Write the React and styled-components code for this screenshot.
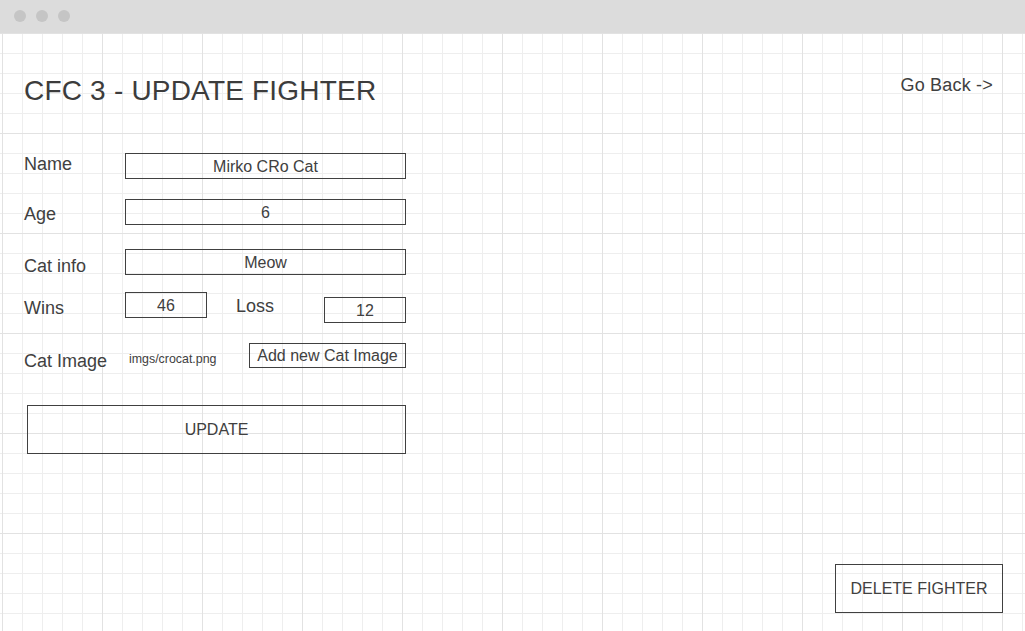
import React from "react";
import styled, { createGlobalStyle } from "styled-components";

const Global = createGlobalStyle`
  html, body { margin: 0; padding: 0; background: #fff; }
  body { font-family: "Liberation Sans", Arial, sans-serif; color: #404040; }
  * { box-sizing: border-box; }
`;

const Window = styled.div`
  width: 1025px;
  height: 631px;
  display: flex;
  flex-direction: column;
  overflow: hidden;
`;

const TitleBar = styled.div`
  height: 33px;
  flex: none;
  background: #dcdcdc;
  display: flex;
  align-items: center;
  gap: 10px;
  padding: 0 0 1px 14px;
`;

const Dot = styled.span`
  width: 12px;
  height: 12px;
  border-radius: 50%;
  background: #c5c5c5;
`;

const Canvas = styled.div`
  flex: 1;
  display: flex;
  flex-direction: column;
  background-color: #fff;
  background-image:
    linear-gradient(to right, #e2e2e2 1px, transparent 1px),
    linear-gradient(to bottom, #e2e2e2 1px, transparent 1px),
    linear-gradient(to right, #eeeeee 1px, transparent 1px),
    linear-gradient(to bottom, #eeeeee 1px, transparent 1px);
  background-size: 100px 100px, 100px 100px, 20px 20px, 20px 20px;
  background-position: 2px 0, 2px 0, 2px 0, 2px 0;
`;

const Header = styled.header`
  display: flex;
  justify-content: space-between;
  align-items: flex-start;
  padding: 42px 32px 0 24px;
`;

const Title = styled.h1`
  margin: 0;
  font-size: 28px;
  line-height: 32px;
  letter-spacing: 0.2px;
  font-weight: normal;
  color: #3c3c3c;
`;

const BackLink = styled.a`
  font-size: 18px;
  line-height: 20px;
  letter-spacing: 0.2px;
  color: #404040;
  text-decoration: none;
  cursor: pointer;
`;

const Form = styled.form`
  width: 406px;
  padding-left: 24px;
  margin-top: 46px;
  display: flex;
  flex-direction: column;
`;

const Row = styled.div`
  display: flex;
  align-items: flex-start;
  margin-top: ${(p) => p.$gap || 0}px;
`;

const Label = styled.label`
  width: 101px;
  flex: none;
  font-size: 18px;
  line-height: 20px;
  margin-top: ${(p) => p.$drop || 0}px;
  color: #404040;
`;

const InlineLabel = styled(Label)`
  width: auto;
  margin-left: ${(p) => p.$left || 0}px;
`;

const Field = styled.div`
  width: ${(p) => p.$w || 281}px;
  height: 26px;
  flex: none;
  border: 1px solid #404040;
  font-size: 16px;
  line-height: 25px;
  text-align: center;
  color: #404040;
  margin-top: ${(p) => p.$drop || 0}px;
  margin-left: ${(p) => (p.$push ? "auto" : "0")};
`;

const FileName = styled.span`
  font-size: 12.4px;
  line-height: 14px;
  margin: 2px 0 0 4px;
  color: #404040;
`;

const SmallButton = styled.button`
  margin-left: auto;
  width: 157px;
  height: 25px;
  padding: 0;
  border: 1px solid #404040;
  background: transparent;
  font-family: inherit;
  font-size: 16px;
  line-height: 23px;
  color: #404040;
  margin-top: -7px;
`;

const BigButton = styled.button`
  display: block;
  width: ${(p) => p.$w}px;
  height: 49px;
  padding: 0;
  border: 1px solid #404040;
  background: transparent;
  font-family: inherit;
  font-size: 16px;
  color: #404040;
  margin-left: ${(p) => p.$left || 0}px;
  margin-top: ${(p) => p.$top || 0}px;
`;

const Footer = styled.footer`
  margin-top: auto;
  display: flex;
  justify-content: flex-end;
  padding: 0 22px 18px 0;
`;

export default function App() {
  return (
    <>
      <Global />
      <Window>
        <TitleBar>
          <Dot />
          <Dot />
          <Dot />
        </TitleBar>
        <Canvas>
          <Header>
            <Title>CFC 3 - UPDATE FIGHTER</Title>
            <BackLink>Go Back -&gt;</BackLink>
          </Header>
          <Form onSubmit={(e) => e.preventDefault()}>
            <Row>
              <Label $drop={1}>Name</Label>
              <Field>Mirko CRo Cat</Field>
            </Row>
            <Row $gap={20}>
              <Label $drop={5}>Age</Label>
              <Field>6</Field>
            </Row>
            <Row $gap={24}>
              <Label $drop={7}>Cat info</Label>
              <Field>Meow</Field>
            </Row>
            <Row $gap={16}>
              <Label $drop={6}>Wins</Label>
              <Field $w={82}>46</Field>
              <InlineLabel $left={29} $drop={4}>Loss</InlineLabel>
              <Field $w={82} $drop={5} $push>12</Field>
            </Row>
            <Row $gap={27}>
              <Label $drop={1}>Cat Image</Label>
              <FileName>imgs/crocat.png</FileName>
              <SmallButton type="button">Add new Cat Image</SmallButton>
            </Row>
            <BigButton type="submit" $w={379} $left={3} $top={34}>
              UPDATE
            </BigButton>
          </Form>
          <Footer>
            <BigButton type="button" $w={168}>DELETE FIGHTER</BigButton>
          </Footer>
        </Canvas>
      </Window>
    </>
  );
}
